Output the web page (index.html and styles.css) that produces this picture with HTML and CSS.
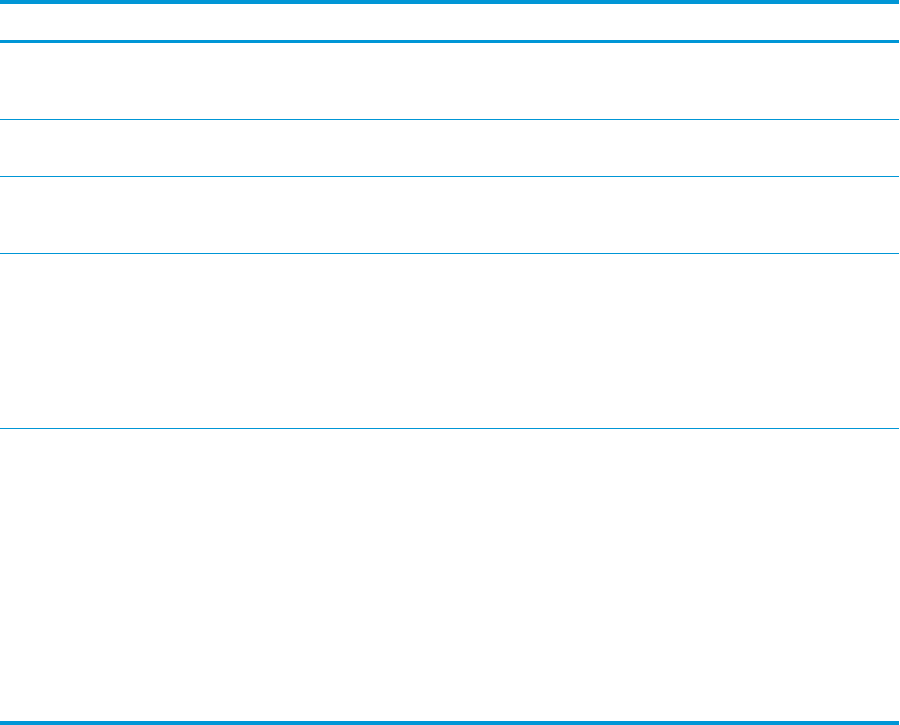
FILE: index.html
```html
<!DOCTYPE html>
<html lang="en">
<head>
    <meta charset="UTF-8">
    <meta name="viewport" content="width=device-width, initial-scale=1.0">
    <title>Table</title>
    <link rel="stylesheet" href="styles.css">
</head>
<body>
    <div class="spec">
        <div class="head"></div>
        <div class="row row-a"></div>
        <div class="row row-b"></div>
        <div class="row row-a"></div>
        <div class="row row-c"></div>
        <div class="row row-d"></div>
    </div>
</body>
</html>
```

FILE: styles.css
```css
body {
    margin: 0;
    background: #ffffff;
    font-family: "Liberation Sans", Arial, sans-serif;
}
.spec {
    width: 899px;
    display: flex;
    flex-direction: column;
    border-top: 4px solid #0096d6;
    border-bottom: 4px solid #0096d6;
}
.head {
    height: 36px;
    border-bottom: 3px solid #0096d6;
}
.row {
    border-bottom: 1px solid #0096d6;
}
.row:last-child {
    border-bottom: none;
}
.row-a {
    height: 76px;
}
.row-b {
    height: 56px;
}
.row-c {
    height: 174px;
}
.row-d {
    height: 292px;
}
```
